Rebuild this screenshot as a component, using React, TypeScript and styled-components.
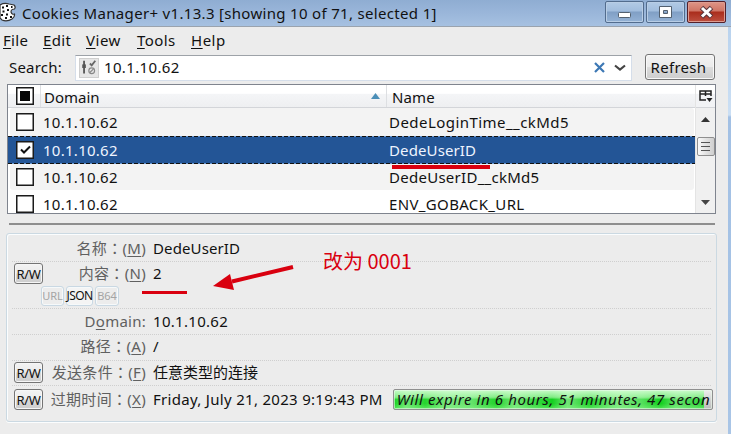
import React from "react";
import styled, { createGlobalStyle } from "styled-components";

const Global = createGlobalStyle`
  * { box-sizing: border-box; }
  body { margin: 0; overflow: hidden; }
  button { font: inherit; color: inherit; padding: 0; margin: 0; }
`;

const Frame = styled.div`
  position: relative;
  width: 731px;
  height: 434px;
  display: flex;
  flex-direction: column;
  overflow: hidden;
  background: linear-gradient(#b4cfec 0, #cbdff4 115px, #a2c0e4 117px, #a9c5e6 100%);
  color: #111;
  font: 15px/20px "Noto Sans", "Noto Sans CJK SC", sans-serif;
`;

const Text = styled.span<{ $ls?: number; $size?: number }>`
  display: inline-block;
  white-space: pre;
  letter-spacing: ${(p) => p.$ls ?? 0}px;
  font-size: ${(p) => p.$size ?? 15}px;
  u { text-underline-offset: 2px; text-decoration-thickness: 1px; }
`;
const Colon = styled.span`
  font-family: "Noto Sans CJK TC", sans-serif;
`;

const TitleBar = styled.header`
  height: 27px;
  flex: none;
  display: flex;
  align-items: flex-start;
  background: linear-gradient(#8fadd2, #9ab6da 50%, #a6c1e1);
  border-bottom: 1px solid #9aa3ae;
`;
const TitleIcon = styled.svg`
  flex: none;
  width: 22px;
  height: 24px;
`;
const TitleText = styled.div`
  flex: 1;
  padding-top: 3px;
`;
const WindowButtons = styled.div`
  display: flex;
  gap: 2px;
  padding: 1px 5px 0 0;
`;
const WindowButton = styled.button<{ $close?: boolean }>`
  width: 39px;
  height: 22px;
  display: grid;
  place-items: center;
  border: 1px solid ${(p) => (p.$close ? "#54202a" : "#526c8d")};
  border-radius: 2px;
  box-shadow: inset 0 0 0 1px ${(p) => (p.$close ? "#dd9c91" : "#b8cde5")};
  background: ${(p) =>
    p.$close
      ? "linear-gradient(#df9587 0%, #cf7565 45%, #aa2d1c 50%, #bd5040 100%)"
      : "linear-gradient(#b2cae5 0%, #a1bddd 45%, #809fc5 50%, #94b2d5 100%)"};
`;

const Client = styled.main`
  flex: 1;
  width: 728px;
  display: flex;
  flex-direction: column;
  background: #ececec;
`;
const MenuBar = styled.nav`
  height: 27px;
  flex: none;
  display: flex;
  padding: 3px 0 0 3px;
`;
const MenuItem = styled.div<{ $w: number }>`
  width: ${(p) => p.$w}px;
`;

const SearchRow = styled.div`
  height: 27px;
  flex: none;
  display: flex;
  padding-left: 9px;
`;
const SearchLabel = styled.label`
  width: 66px;
  padding-top: 3px;
`;
const SearchBox = styled.div`
  width: 557px;
  height: 26px;
  margin-top: 1px;
  display: flex;
  align-items: center;
  background: #fff;
  border: 1px solid #d5deea;
  border-top-color: #9da2a8;
  padding: 0 3px 0 3px;
`;
const SearchValue = styled.div`
  flex: 1;
  padding-left: 5px;
  margin-top: -2px;
`;
const FilterIcon = styled.svg`
  flex: none;
  border: 1px solid #cfcfcf;
  background: #e6e6e6;
`;
const RefreshButton = styled.button`
  width: 70px;
  height: 26px;
  margin-left: 13px;
  padding-right: 3px;
  border: 1px solid #747474;
  border-radius: 3px;
  box-shadow: inset 0 0 0 1px #f8f8f8;
  background: linear-gradient(#f3f3f3 0%, #ebebeb 48%, #dcdcdc 52%, #cdcdcd 100%);
`;

const Tree = styled.section`
  width: 709px;
  height: 130px;
  flex: none;
  margin: 3px 0 0 7px;
  border: 1px solid #7f848e;
  display: flex;
  background: #fff;
  overflow: hidden;
`;
const TreeMain = styled.div`
  width: 687px;
`;
const TreeHeader = styled.div`
  height: 23px;
  display: flex;
  background: linear-gradient(#fff 0%, #fff 38%, #f4f5f7 42%, #eeeff1 100%);
  border-bottom: 1px solid #d3d5d9;
`;
const HeaderCell = styled.div<{ $w: number; $pad: number; $line?: boolean }>`
  width: ${(p) => p.$w}px;
  padding: 2px 0 0 ${(p) => p.$pad}px;
  display: flex;
  justify-content: space-between;
  border-right: ${(p) => (p.$line ? "1px solid #dddfe2" : "0")};
`;
const SortArrow = styled.svg`
  margin: 6px 6px 0 0;
`;
const TreeRow = styled.div<{ $h: number; $kind: "odd" | "selected" | "even" }>`
  height: ${(p) => p.$h}px;
  display: grid;
  grid-template-columns: ${(p) => (p.$kind === "odd" ? 33 : 35)}px 346px 1fr;
  align-items: center;
  color: ${(p) => (p.$kind === "selected" ? "#eef4ff" : "#111")};
  background: ${(p) =>
    p.$kind === "selected"
      ? "repeating-linear-gradient(90deg, #111 0 4px, #6798d5 4px 6px) 0 0 / 100% 1px no-repeat, repeating-linear-gradient(90deg, #111 0 4px, #6798d5 4px 6px) 0 100% / 100% 1px no-repeat, #235596"
      : p.$kind === "odd"
      ? "#f3f3f3"
      : "#fff"};
  margin-left: ${(p) => (p.$kind === "odd" ? 2 : 0)}px;
  margin-right: ${(p) => (p.$kind === "odd" ? 1 : 0)}px;
  border-radius: ${(p) => (p.$kind === "odd" ? 3 : 0)}px;
`;
const CheckCell = styled.div<{ $pad: number }>`
  display: flex;
  padding-left: ${(p) => p.$pad}px;
`;
const ScrollColumn = styled.div`
  flex: 1;
  display: flex;
  flex-direction: column;
  background: #f0f0f0;
  border-left: 1px solid #e4e4e4;
`;
const ColumnPicker = styled.div`
  height: 23px;
  display: grid;
  place-items: center;
  background: linear-gradient(#fff 38%, #f2f3f5 42%);
  border-bottom: 1px solid #d3d5d9;
`;
const ScrollTrack = styled.div`
  flex: 1;
  display: flex;
  flex-direction: column;
  align-items: center;
  padding-top: 9px;
`;
const ScrollThumb = styled.div`
  width: 18px;
  height: 19px;
  margin: 15px 0 44px;
  display: grid;
  place-items: center;
  border: 1px solid #8f8f8f;
  border-radius: 2px;
  background: linear-gradient(90deg, #fafafa, #e2e2e2 50%, #cfcfcf);
`;

const Splitter = styled.div`
  width: 706px;
  height: 2px;
  flex: none;
  margin: 9px 0 0 9px;
  background: #8e8e8e;
`;
const Details = styled.section`
  width: 711px;
  height: 189px;
  flex: none;
  margin: 8px 0 0 6px;
  padding: 0 5px;
  border: 1px solid #cbd9e2;
  border-radius: 3px;
  box-shadow: inset 1px 1px #fbfdfe, 0 1px #fbfdfe;
`;
const DetailRow = styled.div<{ $h: number; $last?: boolean }>`
  height: ${(p) => p.$h}px;
  border-bottom: ${(p) => (p.$last ? "0" : "1px dotted #cfcfcf")};
`;
const DetailLine = styled.div<{ $top: number }>`
  display: grid;
  grid-template-columns: 31px 103px 1fr;
  padding-top: ${(p) => p.$top}px;
  height: 24px;
`;
const Label = styled.div`
  display: flex;
  justify-content: flex-end;
  color: #606060;
`;
const Value = styled.div`
  padding-left: 7px;
  display: flex;
`;
const RWButton = styled.button`
  width: 29px;
  height: 21px;
  margin: 0 0 0 2px;
  border: 1px solid #747474;
  border-radius: 3px;
  box-shadow: inset 0 0 0 1px #f6f6f6;
  background: linear-gradient(#f3f3f3 0%, #ebebeb 48%, #dadada 52%, #cdcdcd 100%);
  line-height: 18px;
`;
const Tags = styled.div`
  display: flex;
  gap: 2px;
  padding-left: 29px;
`;
const Tag = styled.span<{ $w: number; $on?: boolean }>`
  width: ${(p) => p.$w}px;
  height: 20px;
  display: flex;
  justify-content: center;
  line-height: 17px;
  border: 1px solid #c9d8e3;
  border-radius: 3px;
  box-shadow: inset 0 0 0 1px #f6f9fa;
  color: ${(p) => (p.$on ? "#111" : "#a4a4a4")};
  background: ${(p) => (p.$on ? "#f4f4f4" : "transparent")};
`;
const Progress = styled.div`
  width: 320px;
  height: 21px;
  flex: none;
  margin: 0 0 0 10px;
  padding: 0 3px;
  overflow: hidden;
  border: 1px solid #8f8f8f;
  border-radius: 2px;
  background:
    linear-gradient(rgba(215,255,215,.92) 0%, rgba(185,250,185,.65) 38%, rgba(255,255,255,0) 50%, rgba(255,255,255,0) 72%, rgba(140,245,140,.5) 100%) 0 0 / 310px 100% no-repeat,
    linear-gradient(90deg, #16d321 0%, #6ee773 4%, #25d52d 10%, #7ce980 17%, #65e26b 25%, #22d32b 33%, #76e77a 39%, #42dc4a 44%, #14cf20 51%, #71e575 56%, #20d32a 63%, #7ce780 72%, #54df5c 80%, #12cf1d 86%, #64e06b 91%, #2ad533 100%) 0 0 / 310px 100% no-repeat,
    linear-gradient(#eee, #bbb);
  box-shadow: inset 0 0 0 1px rgba(235,250,235,.6);
`;
const ProgressText = styled.div`
  width: 313px;
  overflow: hidden;
  font-style: italic;
  line-height: 19px;
`;

const Underline = styled.div<{ $x: number; $y: number; $w: number; $h: number }>`
  position: absolute;
  left: ${(p) => p.$x}px;
  top: ${(p) => p.$y}px;
  width: ${(p) => p.$w}px;
  height: ${(p) => p.$h}px;
  background: #d9000f;
`;
const Arrow = styled.svg`
  position: absolute;
  left: 210px;
  top: 262px;
`;
const Note = styled.div`
  position: absolute;
  left: 323px;
  top: 248px;
  color: #d9000f;
  line-height: 26px;
  font-family: "Noto Sans CJK SC", sans-serif;
`;

function Check({ state }: { state?: "on" | "mixed" }) {
  return (
    <svg width="18" height="18" viewBox="0 0 18 18">
      <rect x="0.75" y="0.75" width="16.5" height="16.5" fill="#fff" stroke="#1b1b1b" strokeWidth="1.5" />
      {state === "mixed" && <rect x="4" y="4" width="10" height="10" fill="#050505" />}
      {state === "on" && <path d="M5 8.5 8 11.5 14 5.5" fill="none" stroke="#111" strokeWidth="2" />}
    </svg>
  );
}

function ReadWrite() {
  return (
    <RWButton>
      <Text $size={13} $ls={-0.4}>R/W</Text>
    </RWButton>
  );
}

function FieldLabel({ name, accessKey }: { name: string; accessKey: string }) {
  return (
    <Label>
      <Text $ls={0.3}>{name}<Colon lang="zh-Hant">：</Colon>(<u>{accessKey}</u>)</Text>
    </Label>
  );
}

const rows = [
  { name: "DedeLoginTime__ckMd5", h: 28, kind: "odd" as const, ls: 0.45 },
  { name: "DedeUserID", h: 28, kind: "selected" as const, ls: 0.12, on: true },
  { name: "DedeUserID__ckMd5", h: 26, kind: "odd" as const, ls: 0.27 },
  { name: "ENV_GOBACK_URL", h: 28, kind: "even" as const, ls: 0.35 },
];

export default function App() {
  return (
    <>
      <Global />
      <Frame>
        <TitleBar>
          <TitleIcon viewBox="0 0 22 24">
            <path d="M0 5 Q4 2.5 9 4 L14 5 Q16 7 14.5 9 Q11 9 11 12 Q12 15 14.5 14 Q15 17 12 19 Q7 22 2 20 L0 18Z" fill="#fff" stroke="#333" strokeWidth="1.2" />
            <path d="M2 7.5h2M6 6h2M7 10h2M2.5 11.5h2M1 15h2M6 14.5h2M5 18h2M10 17h2M11 7h1.5" stroke="#111" strokeWidth="1.8" />
          </TitleIcon>
          <TitleText><Text $ls={0.32}>Cookies Manager+ v1.13.3 [showing 10 of 71, selected 1]</Text></TitleText>
          <WindowButtons>
            <WindowButton aria-label="Minimize">
              <svg width="15" height="14"><rect x="1.5" y="7.5" width="12" height="5" rx="1" fill="#fff" stroke="#53606f" /></svg>
            </WindowButton>
            <WindowButton aria-label="Maximize">
              <svg width="15" height="14"><path fillRule="evenodd" d="M1.5 1.5h12v11h-12z M5.5 5.5h4v3h-4z" fill="#fff" stroke="#53606f" /></svg>
            </WindowButton>
            <WindowButton $close aria-label="Close">
              <svg width="15" height="14"><path d="M2.5 2.5 12.5 12M12.5 2.5 2.5 12" stroke="#59363c" strokeWidth="5" /><path d="M3 3 12 11.5M12 3 3 11.5" stroke="#fff" strokeWidth="3" /></svg>
            </WindowButton>
          </WindowButtons>
        </TitleBar>
        <Client>
          <MenuBar>
            <MenuItem $w={40}><Text $ls={0.3}><u>F</u>ile</Text></MenuItem>
            <MenuItem $w={43}><Text $ls={0.35}><u>E</u>dit</Text></MenuItem>
            <MenuItem $w={51}><Text $ls={0.5}><u>V</u>iew</Text></MenuItem>
            <MenuItem $w={54}><Text $ls={0.4}><u>T</u>ools</Text></MenuItem>
            <MenuItem $w={50}><Text $ls={0.5}><u>H</u>elp</Text></MenuItem>
          </MenuBar>
          <SearchRow>
            <SearchLabel><Text $ls={0.2}>Search:</Text></SearchLabel>
            <SearchBox>
              <FilterIcon width="20" height="20" viewBox="0 0 20 20">
                <path d="M4.5 2v14" stroke="#555" strokeWidth="2" />
                <rect x="2.5" y="6" width="4" height="4" fill="#555" />
                <path d="m11 5 2 2 4-5" fill="none" stroke="#666" strokeWidth="2" />
                <circle cx="13" cy="13" r="3.2" fill="none" stroke="#888" strokeWidth="1.3" />
                <path d="m11 15 4-4" stroke="#888" strokeWidth="1.3" />
              </FilterIcon>
              <SearchValue><Text $ls={0.35}>10.1.10.62</Text></SearchValue>
              <svg width="36" height="14" viewBox="0 0 36 14" fill="none">
                <path d="M3 2 12 11M12 2 3 11" stroke="#3d78b5" strokeWidth="2.2" />
                <path d="m23 4.5 5 4 5-4" stroke="#444" strokeWidth="2.2" />
              </svg>
            </SearchBox>
            <RefreshButton><Text $ls={0.3}>Refresh</Text></RefreshButton>
          </SearchRow>
          <Tree>
            <TreeMain>
              <TreeHeader>
                <HeaderCell $w={33} $pad={8} $line><Check state="mixed" /></HeaderCell>
                <HeaderCell $w={346} $pad={3} $line>
                  <Text>Domain</Text>
                  <SortArrow width="9" height="6"><path d="M4.5 0 9 6H0Z" fill="#4b8fb8" /></SortArrow>
                </HeaderCell>
                <HeaderCell $w={308} $pad={5}><Text $ls={0.1}>Name</Text></HeaderCell>
              </TreeHeader>
              {rows.map((r) => (
                <TreeRow key={r.name} $h={r.h} $kind={r.kind}>
                  <CheckCell $pad={r.kind === "odd" ? 6 : 8}><Check state={r.on ? "on" : undefined} /></CheckCell>
                  <Text $ls={0.27}>10.1.10.62</Text>
                  <Text $ls={r.ls}>{r.name}</Text>
                </TreeRow>
              ))}
            </TreeMain>
            <ScrollColumn>
              <ColumnPicker>
                <svg width="14" height="13" viewBox="0 0 14 13" fill="none" stroke="#222" strokeWidth="1.5">
                  <path d="M7 10H1V1h11v5M1 4h11M6.5 1v5" />
                  <path d="M7.5 8h6l-3 4z" fill="#222" stroke="none" />
                </svg>
              </ColumnPicker>
              <ScrollTrack>
                <svg width="9" height="5"><path d="M4.5 0 9 5H0Z" fill="#333" /></svg>
                <ScrollThumb>
                  <svg width="9" height="11"><path d="M0 1.5h9M0 5.5h9M0 9.5h9" stroke="#555" /></svg>
                </ScrollThumb>
                <svg width="9" height="5"><path d="M0 0H9L4.5 5Z" fill="#444" /></svg>
              </ScrollTrack>
            </ScrollColumn>
          </Tree>
          <Splitter />
          <Details>
            <DetailRow $h={28}>
              <DetailLine $top={4}>
                <span />
                <FieldLabel name="名称" accessKey="M" />
                <Value><Text $ls={0.12}>DedeUserID</Text></Value>
              </DetailLine>
            </DetailRow>
            <DetailRow $h={47}>
              <DetailLine $top={1}>
                <ReadWrite />
                <FieldLabel name="内容" accessKey="N" />
                <Value><Text>2</Text></Value>
              </DetailLine>
              <Tags>
                <Tag $w={23}><Text $size={11}>URL</Text></Tag>
                <Tag $w={27} $on><Text $size={12} $ls={-0.6}>JSON</Text></Tag>
                <Tag $w={24}><Text $size={11}>B64</Text></Tag>
              </Tags>
            </DetailRow>
            <DetailRow $h={26}>
              <DetailLine $top={2}>
                <span />
                <Label><Text $ls={0.25}>D<u>o</u>main:</Text></Label>
                <Value><Text $ls={0.3}>10.1.10.62</Text></Value>
              </DetailLine>
            </DetailRow>
            <DetailRow $h={26}>
              <DetailLine $top={1}>
                <span />
                <FieldLabel name="路径" accessKey="A" />
                <Value><Text>/</Text></Value>
              </DetailLine>
            </DetailRow>
            <DetailRow $h={25}>
              <DetailLine $top={1}>
                <ReadWrite />
                <FieldLabel name="发送条件" accessKey="F" />
                <Value><Text>任意类型的连接</Text></Value>
              </DetailLine>
            </DetailRow>
            <DetailRow $h={28} $last>
              <DetailLine $top={3}>
                <ReadWrite />
                <FieldLabel name="过期时间" accessKey="X" />
                <Value>
                  <Text $ls={0.3}>Friday, July 21, 2023 9:19:43 PM</Text>
                  <Progress>
                    <ProgressText><Text $ls={0.6}>Will expire in 6 hours, 51 minutes, 47 seconds</Text></ProgressText>
                  </Progress>
                </Value>
              </DetailLine>
            </DetailRow>
          </Details>
        </Client>
        <Underline $x={392} $y={165} $w={98} $h={4} />
        <Underline $x={142} $y={291} $w={45} $h={3} />
        <Arrow width="88" height="32" viewBox="0 0 88 32">
          <path d="M83 5 22 19.5" stroke="#d9000f" strokeWidth="4" />
          <path d="M3 24 20 12 24 28Z" fill="#d9000f" />
        </Arrow>
        <Note><Text $size={20}>改为 0001</Text></Note>
      </Frame>
    </>
  );
}
